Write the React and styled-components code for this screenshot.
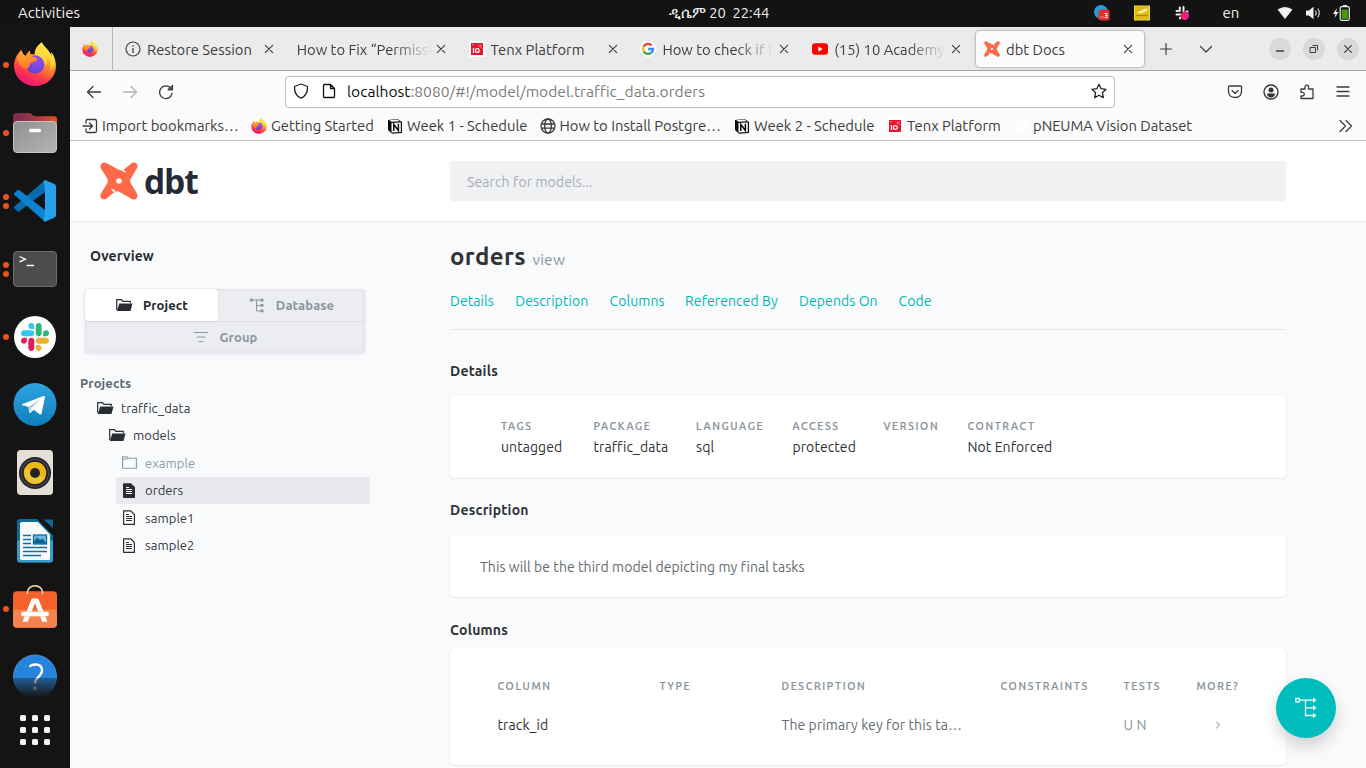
import React from "react";
import styled, { createGlobalStyle, css } from "styled-components";

const GlobalStyle = createGlobalStyle`
  * { box-sizing: border-box; }
  html, body { margin: 0; padding: 0; overflow: hidden; background: #131313; }
  body { font-family: "Ubuntu", "Noto Sans", "Open Sans", sans-serif; font-size: 14px; color: #33363b; }
  svg { display: block; flex: none; }
`;

/* ---------- desktop ---------- */
const Desktop = styled.div`
  width: 1366px; height: 768px; display: flex; flex-direction: column; overflow: hidden; background: #131313;
`;
const TopBar = styled.header`
  height: 27px; flex: none; display: grid; grid-template-columns: 1fr auto 1fr; align-items: center;
  padding: 0 10px 1px 18px; color: #f0f0f0; font-size: 15px; line-height: 26px;
`;
const Activities = styled.span` letter-spacing: 0.05px; `;
const Clock = styled.span` white-space: pre; font-size: 14.7px; padding-left: 64px; `;
const Tray = styled.div` display: flex; align-items: center; justify-content: flex-end; `;
const TrayItem = styled.span` width: ${(p) => p.$w}px; display: flex; justify-content: center; `;
const Screen = styled.div` flex: 1; display: flex; min-height: 0; `;

/* ---------- dock ---------- */
const Dock = styled.nav` width: 70px; flex: none; display: flex; flex-direction: column; background: #141414; `;
const DockApps = styled.div` position: relative; height: 669px; padding-top: 3px; overflow: hidden; `;
const DockItem = styled.div` height: 68px; display: flex; align-items: center; `;
const Dots = styled.div` width: 13px; display: flex; flex-direction: column; gap: 3px; padding: 2px 0 0 3px; `;
const Dot = styled.i` width: 6px; height: 6px; border-radius: 50%; background: #e95420; `;
const DockFade = styled.div`
  position: absolute; left: 0; right: 0; bottom: 0; height: 18px;
  background: linear-gradient(rgba(20,20,20,0.35), rgba(20,20,20,0.95));
`;
const AppGrid = styled.div`
  display: grid; grid-template-columns: repeat(3, 6px); gap: 6px; justify-content: center; padding-top: 19px;
  i { width: 6px; height: 6px; background: #f4f4f2; border-radius: 1.5px; }
`;

/* ---------- browser chrome ---------- */
const Browser = styled.div` flex: 1; display: flex; flex-direction: column; min-width: 0; background: #f9fafc; position: relative; `;
const TabStrip = styled.div`
  height: 44px; flex: none; display: flex; align-items: center; background: #ebebeb; border-bottom: 1px solid #a2a2a2; color: #3c3c3c;
`;
const PinnedTab = styled.div` width: 43px; height: 43px; padding-left: 12px; display: flex; align-items: center; border-right: 1px solid #b4b4b4; margin-right: 2px; `;
const Tab = styled.div`
  width: 171.8px; height: 43px; padding: 4px 2px; flex: none;
`;
const TabBody = styled.div`
  height: 36px; width: 168px; padding: 0 8px; border-radius: 4px; display: flex; align-items: center; gap: 6px;
  ${(p) => p.$active && css`background: #fbfbfb; box-shadow: 0 0 3px rgba(0,0,0,0.45);`}
`;
const TabLabel = styled.span`
  flex: 1; min-width: 0; font-size: 14.8px; line-height: 20px; padding-top: 1px; white-space: nowrap;
  ${(p) => p.$fade && css`margin-right: -6px; mask-image: linear-gradient(to right, #000 calc(100% - 40px), rgba(0,0,0,0.05) calc(100% - 4px));`}
`;
const StripButtons = styled.div` display: flex; align-items: center; flex: 1; padding: 0 7px 0 12px; `;
const StripButton = styled.span` width: 40px; display: flex; justify-content: flex-start; `;
const WindowButtons = styled.div` display: flex; gap: 12px; margin-left: auto; `;
const WindowButton = styled.span`
  width: 22px; height: 22px; border-radius: 50%; background: #d9d9d9; display: flex; align-items: center; justify-content: center;
`;
const NavBar = styled.div` height: 41px; flex: none; background: #fbfbfb; display: flex; align-items: center; padding: 0 15.5px 0 16px; `;
const NavButtons = styled.div` display: flex; gap: 20px; width: 199px; `;
const UrlBox = styled.div`
  width: 830px; height: 32px; background: #fff; border: 1px solid #bdbdbd; border-radius: 4px; display: flex; align-items: center;
  padding: 0 7px 1px; gap: 12px;
`;
const Url = styled.span` flex: 1; margin-left: -2px; font-size: 15.6px; line-height: 20px; color: #7c7c7c; b { font-weight: 400; color: #0d0d0d; } `;
const NavTools = styled.div` display: flex; gap: 20px; margin-left: auto; `;
const Bookmarks = styled.div`
  height: 29px; flex: none; background: #fbfbfb; display: flex; align-items: center; padding: 0 12px 0 12px; color: #3a3a3a;
  border-bottom: 1px solid #c4c4c4;
`;
const Bookmark = styled.span` display: flex; align-items: center; gap: 4px; width: ${(p) => p.$w}px; font-size: 14.8px; line-height: 20px; white-space: nowrap; `;
const More = styled.span` margin-left: auto; `;

/* ---------- docs page ---------- */
const DocsHeader = styled.header`
  height: 81px; flex: none; background: #fff; border-bottom: 1px solid #e8eaee; display: flex; align-items: center; padding-left: 30px;
`;
const Brand = styled.div` width: 350px; display: flex; align-items: center; gap: 6px; `;
const BrandName = styled.span` font: 700 33.5px/38px "Open Sans", sans-serif; letter-spacing: -1.1px; color: #262a38; `;
const Search = styled.div`
  width: 836px; height: 40px; border-radius: 4px; background: #f0f1f3; padding-left: 17px; color: #a6adb4; font-size: 14px; line-height: 42px; letter-spacing: 0.1px;
`;
const DocsBody = styled.div` flex: 1; display: flex; min-height: 0; `;
const Sidebar = styled.aside` width: 380px; flex: none; padding: 24px 0 0 10px; `;
const Overview = styled.div` padding-left: 10px; font-weight: 700; font-size: 14px; line-height: 20px; color: #262a2e; letter-spacing: 0.12px; `;
const Switcher = styled.div`
  width: 280px; margin: 23px 0 0 5px; display: grid; grid-template-columns: 133px 147px; border-radius: 4px;
  background: #ebedf1; box-shadow: 0 1px 3px rgba(30,40,60,0.11), inset 0 0 4px rgba(30,40,60,0.07);
`;
const SwitchTab = styled.div`
  height: 32px; display: flex; align-items: center; justify-content: center; font-weight: 700; font-size: 13px; letter-spacing: 0.1px;
  gap: ${(p) => p.$gap}px; color: #8b959e; padding-left: 1px;
  ${(p) => p.$wide && css`grid-column: span 2; box-shadow: inset 0 1px 1px rgba(30,40,60,0.06);`}
  ${(p) => p.$active && css`background: #fff; color: #24282c; border-radius: 4px; box-shadow: 0 0 2px rgba(30,40,60,0.15);`}
`;
const TreeTitle = styled.div` margin-top: 20px; line-height: 21px; font-weight: 700; font-size: 13px; color: #606a72; letter-spacing: 0.1px; `;
const TreeRow = styled.div`
  height: 27.5px; margin-left: ${(p) => p.$indent}px; width: ${(p) => 290 - p.$indent}px; display: flex; align-items: center;
  font-size: 13px; letter-spacing: 0.06px; color: ${(p) => (p.$muted ? "#8f99a2" : "#33383d")}; border-radius: 3px;
  background: ${(p) => (p.$selected ? "#e8eaee" : "transparent")};
  svg { margin-right: ${(p) => p.$gap}px; margin-left: ${(p) => p.$pad || 0}px; }
`;
const Main = styled.main` width: 836px; flex: none; padding-top: 18px; `;
const Title = styled.h1`
  margin: 0; height: 34px; font-size: 24px; line-height: 34px; font-weight: 700; color: #303338; display: flex; align-items: baseline; gap: 6.5px; letter-spacing: 0.4px;
  small { font-size: 15.600px; line-height: 20px; font-weight: 400; color: #8b959e; letter-spacing: 0.15px; }
`;
const Anchors = styled.nav` margin-top: 17px; padding-bottom: 18px; border-bottom: 1px solid #e3e6e9; display: flex; line-height: 20px; font-size: 14px; letter-spacing: 0.07px; color: #00b8b8; `;
const Anchor = styled.a` width: ${(p) => p.$w}px; white-space: nowrap; `;
const Heading = styled.h2` margin: ${(p) => p.$top}px 0 0; font-size: 14px; line-height: 20px; font-weight: 700; color: #303338; letter-spacing: 0.22px; `;
const Card = styled.section`
  margin-top: ${(p) => p.$top}px; height: ${(p) => p.$h}px; background: #fff; border-radius: 4px;
  box-shadow: 0 0 1px rgba(30,40,60,0.2), 0 1px 2px rgba(30,40,60,0.07); padding: ${(p) => p.$pad};
`;
const Facts = styled.dl` margin: 0; display: flex; `;
const Fact = styled.div` width: ${(p) => p.$w}px; white-space: nowrap; `;
const Caption = styled.span` display: block; font-size: 10.5px; line-height: 20px; letter-spacing: 1.65px; color: #87929b; -webkit-text-stroke: 0.2px #87929b; font-weight: 500; text-transform: uppercase; white-space: nowrap; `;
const Value = styled.span` display: block; font-size: 14px; line-height: 22px; color: #2d3136; letter-spacing: 0.07px; `;
const Prose = styled.p` margin: 0; font-size: 14px; line-height: 20px; color: #626b73; letter-spacing: 0.07px; `;
const Table = styled.div` display: grid; grid-template-columns: 162px 122px 219px 123px 73px 60px; row-gap: 18px; align-items: center; `;
const Cell = styled.span` font-size: 14px; line-height: 22px; white-space: nowrap; color: ${(p) => p.$color || "#2d3136"}; letter-spacing: 0.1px; padding-left: ${(p) => p.$pl || 0}px; `;
const Fab = styled.button`
  position: absolute; left: 1206px; top: 651px; width: 60px; height: 60px; border: 0; border-radius: 50%; background: #00bcbc;
  display: flex; align-items: center; justify-content: center; padding: 0; box-shadow: 0 8px 16px rgba(0,0,0,0.17);
`;

/* ---------- icons ---------- */
const Firefox = ({ size = 44, id }) => (
  <svg width={size} height={size} viewBox="0 0 44 44">
    <defs>
      <linearGradient id={id + "a"} x1=".75" y1="0" x2=".3" y2="1">
        <stop offset=".1" stopColor="#fff14f" /><stop offset=".4" stopColor="#ff9a2b" /><stop offset=".72" stopColor="#ff3b47" /><stop offset="1" stopColor="#e5127d" />
      </linearGradient>
      <radialGradient id={id + "b"} cx=".6" cy=".2" r=".9"><stop offset="0" stopColor="#a04cf0" /><stop offset="1" stopColor="#5145cf" /></radialGradient>
      <linearGradient id={id + "c"} x1="0" y1="0" x2=".4" y2="1"><stop offset="0" stopColor="#ffb02e" /><stop offset="1" stopColor="#ff7a2b" /></linearGradient>
    </defs>
    <path d="M8.5 8C4 12 1 17.500 1 24a21 20 0 0 0 42 0c0-5-2-11-5-14 .5 1.500.7 3 .6 4C36 8 31 5 28.700.3 24 4 21.500 8 22 12.500c-4-.5-7 0-9.500 1.500C10 12.500 8.800 10 8.500 8z" fill={`url(#${id}a)`} />
    <path d="M28.700.3C24 4 20.500 9 22 14c5 0 10 4 10 10 2-2 3-6 1-10 4 3 5 9 4 15 5-5 7-12 1-19 .5 1.500.7 3 .6 4C36 8 31 5 28.700.3z" fill="#ffe03d" opacity=".75" />
    <circle cx="22" cy="22.500" r="9.200" fill={`url(#${id}b)`} />
    <path d="M8.500 8c.4 3 2 5 4 6 1.500-2.500 2.500-4.500 4.500-5.500 0 2 .5 4 1.500 5.500 2.500 1 4.500 1.500 6 3-1 3-5 2.500-7 4.500-1.500 1.500-.5 4-3 5-4 1-8-3-10-9C5 13 6.500 10 8.500 8z" fill={`url(#${id}c)`} />
  </svg>
);
const Files = () => (
  <svg width="44" height="44" viewBox="0 0 44 44">
    <defs>
      <linearGradient id="fb"><stop offset="0" stopColor="#772953" /><stop offset=".5" stopColor="#a13840" /><stop offset="1" stopColor="#e95420" /></linearGradient>
      <linearGradient id="ff" x1="0" y1="0" x2="1" y2="1"><stop offset="0" stopColor="#8f8f8f" /><stop offset="1" stopColor="#b5b5b5" /></linearGradient>
    </defs>
    <path d="M0 20V6q0-3 3-3h13q1.500 0 2.500 1l1.500 1.500q.8.8 2 .8H41q3 0 3 3V20z" fill="url(#fb)" />
    <rect x=".5" y="11.500" width="43" height="31" rx="3.500" fill="url(#ff)" stroke="#c4c4c4" />
    <rect x="16" y="18.700" width="12" height="3.600" rx="1.500" fill="#fff" />
  </svg>
);
const VSCode = () => (
  <svg width="44" height="44" viewBox="0 0 44 44">
    <path d="M32 2v12L6.500 33.300q-1 .7-2 0L1.500 30.500q-1-1 0-2z" fill="#0a6cb0" />
    <path d="M32 43.700V32L6.500 12.300q-1-.7-2 0L1.500 15q-1 1 0 2z" fill="#0d83d0" />
    <path d="M32 2q-1 .5-1.500 1.500l1.500 8v22l-1.500 8.500q.5 1.200 1.500 1.700l9.500-4.200q1.500-.8 1.500-2.500V8.500q0-1.700-1.500-2.400z" fill="#27a0f0" />
  </svg>
);
const Terminal = () => (
  <svg width="44" height="44" viewBox="0 0 44 44">
    <rect x=".5" y="5.500" width="43" height="35" rx="3.500" fill="#4c4c4c" stroke="#6d6d6d" />
    <path d="M6.500 10.500l6 2.700-6 2.700M13.500 19.500H21" fill="none" stroke="#fff" strokeWidth="1.300" />
  </svg>
);
const SlackMark = ({ size }) => (
  <svg width={size} height={size} viewBox="0 0 122.800 122.800">
    <path fill="#e01e5a" d="M25.800 77.600c0 7.100-5.800 12.900-12.900 12.900S0 84.700 0 77.600s5.800-12.900 12.900-12.900h12.900v12.900zm6.500 0c0-7.100 5.800-12.900 12.900-12.900s12.900 5.800 12.900 12.900v32.300c0 7.100-5.800 12.900-12.900 12.900s-12.900-5.800-12.900-12.900V77.600z" />
    <path fill="#36c5f0" d="M45.200 25.800c-7.100 0-12.900-5.800-12.900-12.900S38.100 0 45.200 0s12.900 5.800 12.900 12.900v12.900H45.200zm0 6.500c7.100 0 12.900 5.800 12.900 12.900s-5.800 12.900-12.900 12.900H12.900C5.800 58.100 0 52.300 0 45.200s5.800-12.900 12.900-12.900h32.300z" />
    <path fill="#2eb67d" d="M97 45.200c0-7.100 5.800-12.900 12.900-12.900s12.900 5.800 12.900 12.900-5.800 12.900-12.900 12.900H97V45.200zm-6.500 0c0 7.100-5.800 12.900-12.900 12.900s-12.900-5.800-12.900-12.900V12.900C64.700 5.800 70.500 0 77.600 0s12.900 5.800 12.900 12.900v32.300z" />
    <path fill="#ecb22e" d="M77.600 97c7.100 0 12.900 5.800 12.900 12.900s-5.800 12.900-12.900 12.900-12.900-5.800-12.900-12.900V97h12.900zm0-6.500c-7.100 0-12.900-5.800-12.900-12.900s5.800-12.900 12.900-12.900h32.300c7.100 0 12.900 5.800 12.900 12.900s-5.800 12.900-12.900 12.900H77.600z" />
  </svg>
);
const SlackDisc = styled.span` width: 42px; height: 42px; margin: 2px 1px 0; border-radius: 50%; background: #fff; display: flex; align-items: center; justify-content: center; `;
const Telegram = () => (
  <svg width="44" height="44" viewBox="0 0 44 44">
    <defs><linearGradient id="tg" x1="0" y1="0" x2="0" y2="1"><stop offset="0" stopColor="#2fa4e0" /><stop offset="1" stopColor="#0e7fba" /></linearGradient></defs>
    <circle cx="22" cy="22.500" r="21.500" fill="url(#tg)" />
    <path d="M9 22.300L30.500 14q1.800-.5 1.500 1.300L28.600 31.500q-.5 1.700-2 .8l-6-4.500-3 3q-.8.8-1 .2l-1.300-6.300-5.800-1.500q-1-.3-.5-.9z" fill="#fff" />
    <path d="M15.300 24.700L27.500 17 18.500 26l-.8 4.500z" fill="#a9d2ea" />
  </svg>
);
const Rhythm = () => (
  <svg width="44" height="46" viewBox="0 0 44 46">
    <rect x="4" y="1" width="36" height="45" rx="4" fill="#e3dfd4" />
    <circle cx="22" cy="24" r="16" fill="#26262e" /><circle cx="22" cy="24" r="14" fill="#4b4c5a" /><circle cx="22" cy="24" r="12.800" fill="#17171c" />
    <circle cx="22" cy="24" r="11.300" fill="#ecb712" /><path d="M12 19a11.300 11.300 0 0 0 20 10z" fill="#f6d04a" opacity=".6" /><circle cx="22" cy="24" r="5" fill="#232323" />
  </svg>
);
const Writer = () => (
  <svg width="44" height="46" viewBox="0 0 44 46">
    <g transform="translate(0 1.500)">
      <path d="M7 .5h17L40 17v24q0 3-3 3H7q-3 0-3-3V3.500q0-3 3-3z" fill="#0c6a9c" />
      <path d="M4 22h36v19q0 3-3 3H7q-3 0-3-3z" fill="#3a9bc9" />
      <path d="M30.500 1H40v8.500z" fill="#12679a" />
      <path d="M9.500 3.500H25L37 16v24q0 1.500-1.500 1.500h-26Q7 41.500 7 40V5q0-1.500 2.500-1.500z" fill="#f7f9fa" />
      <path d="M10 17h8M10 21h8M10 25h8M10 29h24M10 33h24M10 37h18" stroke="#0d71a8" strokeWidth="1.700" />
      <rect x="20.500" y="16.500" width="13" height="9" fill="#6cb8dc" stroke="#0d71a8" strokeWidth="1.300" />
      <path d="M21 25v-2l3-4 3 2.500 2-1.500 4 4v1z" fill="#0d5f92" />
    </g>
  </svg>
);
const Software = () => (
  <svg width="44" height="48" viewBox="0 0 44 48">
    <g transform="translate(0 -.3)">
      <rect x="0" y="7.500" width="44" height="36.500" rx="4" fill="#f2622a" /><path d="M0 26h44v14q0 4-4 4H4q-4 0-4-4z" fill="#f5824f" />
      <path d="M14.500 10.500V8.500a7.500 6.500 0 0 1 15 0v2" fill="none" stroke="#f5dcaa" strokeWidth="1.600" />
      <path d="M9.500 38l8.700-22q.5-1.300 1.800-1.300h4q1.300 0 1.800 1.300L34.500 38h-5.200L22 19.500 14.700 38z" fill="#fff" />
      <rect x="8" y="28" width="28" height="4.600" rx="2.300" fill="#fff" stroke="#f2b79c" strokeWidth=".5" />
    </g>
  </svg>
);
const Help = () => (
  <svg width="44" height="44" viewBox="0 0 44 44">
    <circle cx="22" cy="22.500" r="21.500" fill="#2584dc" stroke="#63abea" strokeWidth=".7" />
    <path d="M16.500 12.500q2.500-2 6-2 6.500 0 6.500 6 0 3-3.500 6.300-3.500 3-3.500 6.700" fill="none" stroke="#fff" strokeWidth="2.300" />
    <circle cx="22" cy="34.500" r="2" fill="#fff" />
  </svg>
);
const Line = ({ d, w = 16, h = w, box, sw = 1.3, color = "#3c3c3c", fill = "none" }) => (
  <svg width={w} height={h} viewBox={box || `0 0 ${w} ${h}`} fill={fill} stroke={color} strokeWidth={sw} strokeLinecap="round" strokeLinejoin="round"><path d={d} /></svg>
);
const Close = () => <Line d="M4.300 4.300l7.400 7.400M11.700 4.300l-7.400 7.400" sw={1.100} />;
const Info = () => (
  <svg width="16" height="16" viewBox="0 0 16 16"><circle cx="8" cy="8" r="7" fill="none" stroke="#444" strokeWidth="1.200" /><path d="M8 7v5M8 4v1.500" stroke="#444" strokeWidth="1.300" /></svg>
);
const Tenx = ({ s = 16 }) => (
  <svg width={s} height={s} viewBox="0 0 16 16"><rect width="16" height="16" fill="#fff" /><rect x="2" y="2" width="12" height="12" fill="#e8132f" />
    <path d="M4.500 7v5" stroke="#fff" strokeWidth="1.300" /><circle cx="8.300" cy="9.500" r="1.900" fill="none" stroke="#fff" strokeWidth="1.200" /><path d="M9 3.500l4 4M12.500 3l-1.500 2.500M3 3.500l2 .5" stroke="#f9a0aa" strokeWidth=".8" /></svg>
);
const Google = () => (
  <svg width="16" height="16" viewBox="0 0 16 16"><circle cx="8" cy="8" r="8" fill="#fff" />
    <g fill="none" strokeWidth="2.300"><path d="M11.600 4.300A5 5 0 0 0 3.700 5.600" stroke="#ea4335" /><path d="M3.700 5.600a5 5 0 0 0 0 4.800" stroke="#fbbc05" /><path d="M3.700 10.400a5 5 0 0 0 7.600 1.300" stroke="#34a853" /><path d="M11.300 11.700A5 5 0 0 0 13 8H8.200" stroke="#4285f4" /></g></svg>
);
const YouTube = () => (<svg width="16" height="16" viewBox="0 0 16 16"><rect y="2.200" width="16" height="11.600" rx="3" fill="#f00" /><path d="M6.400 5.500v5l4.300-2.500z" fill="#fff" /></svg>);
const DbtMark = ({ s, hole = "#fff" }) => (
  <svg width={s} height={s} viewBox="1.500 1.300 37.500 37.500">
    <path fill="#ff694a" d="M7.800 2.200L20.500 9.300q2 1 4-.2L33 2.300c3.500-2 7 1.700 5 5.200l-6 10q-1.500 2.500 0 5l6 10c2 3.500-1.700 7.200-5.200 5.200L20 30.500q-2-1-4 .2l-8.500 7.200C4 39.700.5 36 2.300 32.600l6.200-10q1.500-2.600 0-5.200L2.300 7.400C.5 4 4.300.300 7.800 2.200z" />
    <path fill={hole} d="M23.500 8.500q3.500 2 4 3.200-1.500.3-3.700-1.200zM15.800 31.500q-3-2-3.500-3.700 1.700-.3 3.900 1.500z" /><circle cx="20.200" cy="20" r="2.700" fill={hole} />
  </svg>
);
const Notion = () => (
  <svg width="16" height="16" viewBox="0 0 16 16"><path d="M1 2l9.500-1L15 4v11l-10 .7L1 12z" fill="#0c0c0c" /><path d="M4.500 5l9.300-.6v9.600l-9.300.6z" fill="#fff" /><path d="M2.200 2.300l8-.7 2.600 1.600-8.300.6z" fill="#fff" />
    <path d="M6.800 13V6.500l4.600 6V5.800" fill="none" stroke="#0c0c0c" strokeWidth="1.500" /></svg>
);
const Globe = () => (
  <svg width="16" height="16" viewBox="0 0 16 16" fill="none" stroke="#3a3a3a" strokeWidth="1.300"><circle cx="8" cy="8" r="7" /><ellipse cx="8" cy="8" rx="3.300" ry="7" /><path d="M1.300 6h13.400M1.300 10.200h13.400" /></svg>
);
const OpenFolder = () => (
  <svg width="17" height="14" viewBox="0 0 17 14"><path d="M.7 12V1.700h4.800l1.300 1.600h7.500V5" fill="none" stroke="#2a2e32" strokeWidth="1.200" /><path d="M3.300 5.500h13.200L14.500 13H.8z" fill="#2a2e32" /></svg>
);
const Folder = () => (<svg width="15" height="13" viewBox="0 0 15 13"><path d="M.6 12.300V.8H5l1.200 1.500h8.200v10zM.6 3H6" fill="none" stroke="#8f99a2" strokeWidth="1.100" /></svg>);
const Doc = ({ solid }) => (
  <svg width="12" height="15" viewBox="0 0 12 15"><path d="M.6.900h7.200L11.400 4.500v9.800H.6z" fill={solid ? "#2a2e32" : "none"} stroke="#2a2e32" strokeWidth="1.200" strokeLinejoin="round" />
    <path d="M3 4.500h3M3 6.500h6M3 8.500h6M3 10.500h6" stroke={solid ? "#fff" : "#2a2e32"} strokeWidth="1" /></svg>
);
const TreeIcon = () => (
  <svg width="14" height="15" viewBox="0 0 14 15"><path d="M2 2h10M6.500 2v11H12M6.500 7.500H12" fill="none" stroke="#8b959e" strokeWidth="1" /><path d="M0 .7h3v2.800H0zM10.500.7h3v2.800h-3zM10.500 6h3v2.800h-3zM10.500 11.500h3v2.800h-3z" fill="#8b959e" /></svg>
);
const Faint = () => (
  <svg width="16" height="16" viewBox="0 0 16 16" fill="none" stroke="#fff" strokeWidth="2"><path d="M1.500 4h5L1.500 12h5.500M14.500 12.500H11q-2 0-2-2V6q0-2 2-2h1q2 0 2 2v2H9" /></svg>
);

const DOCK = [
  [1, <Firefox id="dock" />], [1, <Files />], [2, <VSCode />], [2, <Terminal />], [1, <SlackDisc><SlackMark size={28} /></SlackDisc>],
  [0, <Telegram />], [0, <Rhythm />], [0, <Writer />], [1, <Software />], [0, <Help />],
];
const TABS = [
  { icon: <Info />, text: "Restore Session" },
  { text: "How to Fix “Permissi", fade: true },
  { icon: <Tenx />, text: "Tenx Platform" },
  { icon: <Google />, text: "How to check if I a", fade: true },
  { icon: <YouTube />, text: "(15) 10 Academy -", fade: true },
  { icon: <DbtMark s={16} />, text: "dbt Docs", active: true },
];
const MARKS = [
  [<Line d="M1 8h9M7.500 5L10.500 8l-3 3M4 5V3q0-1.500 1.500-1.500h7.500Q14.500 1.500 14.500 3v10q0 1.500-1.500 1.500H5.500Q4 14.500 4 13v-2" />, "Import bookmarks…", 169],
  [<Firefox size={16} id="bm" />, "Getting Started", 136],
  [<Notion />, "Week 1 - Schedule", 152.5],
  [<Globe />, "How to Install Postgre…", 194.5],
  [<Notion />, "Week 2 - Schedule", 153],
  [<Tenx />, "Tenx Platform", 126],
  [<Faint />, "pNEUMA Vision Dataset", 190],
];
const FACTS = [["Tags", "untagged", 92.5], ["Package", "traffic_data", 102.5], ["Language", "sql", 96.5], ["Access", "protected", 91], ["Version", "", 84], ["Contract", "Not Enforced", 100]];
const ANCHORS = [["Details", 65.300], ["Description", 94.300], ["Columns", 75.500], ["Referenced By", 114], ["Depends On", 99.500], ["Code", 50]];

export default function App() {
  return (
    <Desktop>
      <GlobalStyle />
      <TopBar>
        <Activities>Activities</Activities>
        <Clock>ዲሴም 20  22:44</Clock>
        <Tray>
          <TrayItem $w={20}>
            <svg width="16" height="18" viewBox="0 0 16 18"><circle cx="7" cy="8" r="7" fill="#2b9bd7" /><rect x="4.500" y="5.500" width="11" height="11" rx="2.500" fill="#e0332f" /><path d="M6.500 13h1M8.500 13h1M10.500 9.500h2.500v4h-2.500M11 11.500h2" stroke="#fff" strokeWidth=".9" fill="none" /></svg>
          </TrayItem>
          <TrayItem $w={60}>
            <svg width="16" height="16" viewBox="0 0 16 16"><rect x=".5" y="1" width="15" height="14" fill="#dcb911" stroke="#f0d84a" /><path d="M2.500 8l9-4.500h2V6l-7 2.500z" fill="#fff3a8" /><path d="M2 10.500h12" stroke="#a88a06" /></svg>
          </TrayItem>
          <TrayItem $w={20}>
            <svg width="16" height="16" viewBox="0 0 16 16"><g stroke="#f0f0f0" strokeWidth="2" strokeLinecap="round"><path d="M5.800 2.500v3.500M2.500 6h1.500M9.500 2v4M12.500 6.500h1M2.500 9.500h3.500M6 12.500v1" /></g><circle cx="10.800" cy="10.800" r="4.200" fill="#f0207e" /></svg>
          </TrayItem>
          <TrayItem $w={78}>en</TrayItem>
          <TrayItem $w={30}><svg width="16" height="14" viewBox="0 0 16 14"><path d="M.5 3.500q7.500-5 15 0L8 13z" fill="#f2f2f2" /></svg></TrayItem>
          <TrayItem $w={26}>
            <svg width="15" height="14" viewBox="0 0 15 14"><path d="M0 4.500h3L7.500.8v12.400L3 9.500H0z" fill="#f2f2f2" /><path d="M9.300 4.500q1.800 2.500 0 5M11.700 2.500q3.200 4.500 0 9" stroke="#d0d0d0" fill="none" strokeWidth="1.200" /></svg>
          </TrayItem>
          <TrayItem $w={30}>
            <svg width="17" height="16" viewBox="0 0 17 16"><path d="M4 3L0 9h2.500L1.500 13 5.500 7H3z" fill="#f2f2f2" /><rect x="7.200" y="1.700" width="9.100" height="13.600" rx="1.500" fill="#131313" stroke="#eee" strokeWidth="1.200" /><rect x="10" y="0" width="4" height="2" fill="#eee" /><rect x="8.700" y="4.500" width="6.200" height="9.300" fill="#4a9a10" /></svg>
          </TrayItem>
        </Tray>
      </TopBar>
      <Screen>
        <Dock>
          <DockApps>
            {DOCK.map(([n, icon], i) => (
              <DockItem key={i}><Dots>{Array.from({ length: n }, (_, k) => <Dot key={k} />)}</Dots>{icon}</DockItem>
            ))}
            <DockFade />
          </DockApps>
          <AppGrid>{Array.from({ length: 9 }, (_, i) => <i key={i} />)}</AppGrid>
        </Dock>
        <Browser>
          <TabStrip>
            <PinnedTab><Firefox size={16} id="pin" /></PinnedTab>
            {TABS.map((t) => (
              <Tab key={t.text}>
                <TabBody $active={t.active}>{t.icon}<TabLabel $fade={t.fade}>{t.text}</TabLabel><Close /></TabBody>
              </Tab>
            ))}
            <StripButtons>
              <StripButton><Line d="M8 2.500v11M2.500 8h11" sw={1.200} /></StripButton>
              <StripButton><Line d="M2.500 5.500L8 11l5.500-5.500" sw={1.200} /></StripButton>
              <WindowButtons>
                <WindowButton><Line w={10} d="M1.500 7h7" /></WindowButton>
                <WindowButton><Line w={10} d="M1.500 3.500h5v5h-5zM4 1.500h4.500V6" sw={1} /></WindowButton>
                <WindowButton><Line w={10} d="M1.700 1.700l6.600 6.600M8.300 1.700L1.700 8.300" sw={1.200} /></WindowButton>
              </WindowButtons>
            </StripButtons>
          </TabStrip>
          <NavBar>
            <NavButtons>
              <Line d="M14.500 8H1.500M7 2.500L1.500 8 7 13.500" />
              <Line d="M1.500 8h13M9 2.500L14.500 8 9 13.500" color="#b4b4b4" />
              <Line d="M14 9.500A6.300 6.300 0 1 1 12.500 4l1.500 1.500M14.500 1.500v4.300h-4.300z" />
            </NavButtons>
            <UrlBox>
              <Line d="M8 1l6.500 2.500c.3 5-1.500 9.500-6.500 11.700C3 13 1.200 8.500 1.500 3.500z" color="#222" />
              <Line d="M2.500 2.500q0-1 1-1H9.500L13.500 5.500v8q0 1-1 1h-9q-1 0-1-1zM9.500 1.500v4h4" color="#111" />
              <Url><b>localhost</b>:8080/#!/model/model.traffic_data.orders</Url>
              <Line d="M8 1.200l2.100 4.500 4.900.6-3.600 3.400.9 4.900L8 12.200l-4.300 2.400.9-4.900L1 6.300l4.900-.6z" color="#222" />
            </UrlBox>
            <NavTools>
              <Line d="M2.500 2h11q1 0 1 1v4q0 6.500-6.500 6.500T1.500 7V3q0-1 1-1zM5 6.500l3 3 3-3" />
              <svg width="16" height="16" viewBox="0 0 16 16"><circle cx="8" cy="8" r="7" fill="none" stroke="#333" strokeWidth="1.300" /><circle cx="8" cy="6" r="2.500" fill="#333" /><path d="M3.700 9.500h8.600q-1 4-4.300 4t-4.300-4z" fill="#333" /></svg>
              <Line d="M2 7V5h4V3a1.800 1.800 0 0 1 3.600 0v2H14v9.500H2V12h1.500a1.800 1.800 0 0 0 0-3.600H2z" />
              <Line d="M2 3h12M2 7.500h12M2 12h12" />
            </NavTools>
          </NavBar>
          <Bookmarks>
            {MARKS.map(([icon, text, w]) => <Bookmark key={text} $w={w}>{icon}{text}</Bookmark>)}
            <More><Line d="M2 2.500L7.500 8 2 13.500M8 2.500L13.500 8 8 13.500" /></More>
          </Bookmarks>
          <DocsHeader>
            <Brand><DbtMark s={38} /><BrandName>dbt</BrandName></Brand>
            <Search>Search for models...</Search>
          </DocsHeader>
          <DocsBody>
            <Sidebar>
              <Overview>Overview</Overview>
              <Switcher>
                <SwitchTab $active $gap={10}><OpenFolder />Project</SwitchTab>
                <SwitchTab $gap={12}><TreeIcon />Database</SwitchTab>
                <SwitchTab $wide $gap={12}><Line w={14} d="M.5 2.500h13M3 7h8M5 11.500h4" color="#8b959e" sw={1} />Group</SwitchTab>
              </Switcher>
              <TreeTitle>Projects</TreeTitle>
              <TreeRow $indent={16} $pad={1} $gap={7}><OpenFolder />traffic_data</TreeRow>
              <TreeRow $indent={28} $pad={1} $gap={7}><OpenFolder />models</TreeRow>
              <TreeRow $indent={36} $pad={6} $gap={8} $muted><Folder />example</TreeRow>
              <TreeRow $indent={36} $pad={7} $gap={10} $selected><Doc solid />orders</TreeRow>
              <TreeRow $indent={36} $pad={7} $gap={10}><Doc />sample1</TreeRow>
              <TreeRow $indent={36} $pad={7} $gap={10}><Doc />sample2</TreeRow>
            </Sidebar>
            <Main>
              <Title>orders<small>view</small></Title>
              <Anchors>{ANCHORS.map(([t, w]) => <Anchor key={t} $w={w}>{t}</Anchor>)}</Anchors>
              <Heading $top={31}>Details</Heading>
              <Card $top={15} $h={82} $pad="20px 0 0 51px">
                <Facts>{FACTS.map(([k, v, w]) => <Fact key={k} $w={w}><Caption>{k}</Caption><Value>{v}</Value></Fact>)}</Facts>
              </Card>
              <Heading $top={22}>Description</Heading>
              <Card $top={15} $h={62} $pad="22px 30px"><Prose>This will be the third model depicting my final tasks</Prose></Card>
              <Heading $top={23}>Columns</Heading>
              <Card $top={8} $h={117} $pad="28px 0 0 47.500px">
                <Table>
                  <Caption>Column</Caption><Caption>Type</Caption><Caption>Description</Caption><Caption>Constraints</Caption><Caption>Tests</Caption><Caption>More?</Caption>
                  <Cell>track_id</Cell><Cell /><Cell $color="#626b73">The primary key for this ta…</Cell><Cell /><Cell $color="#8b959e">U N</Cell>
                  <Cell $pl={17}><Line w={8} h={8} d="M2.500 1l3 3-3 3" color="#7d8790" sw={1} /></Cell>
                </Table>
              </Card>
            </Main>
          </DocsBody>
          <Fab>
            <svg width="22" height="22" viewBox="0 0 22 22" fill="none" stroke="#fff" strokeWidth="1.300"><rect x=".8" y="1.500" width="3.400" height="3.400" /><path d="M4.500 3.200H19M10.500 3.200v15.300H19M10.500 10.800H19" /><path d="M18 .5l3.500 2.700L18 6zM18 8l3.500 2.800L18 13.500zM18 15.700l3.500 2.800-3.500 2.700z" fill="#fff" stroke="none" /></svg>
          </Fab>
        </Browser>
      </Screen>
    </Desktop>
  );
}
